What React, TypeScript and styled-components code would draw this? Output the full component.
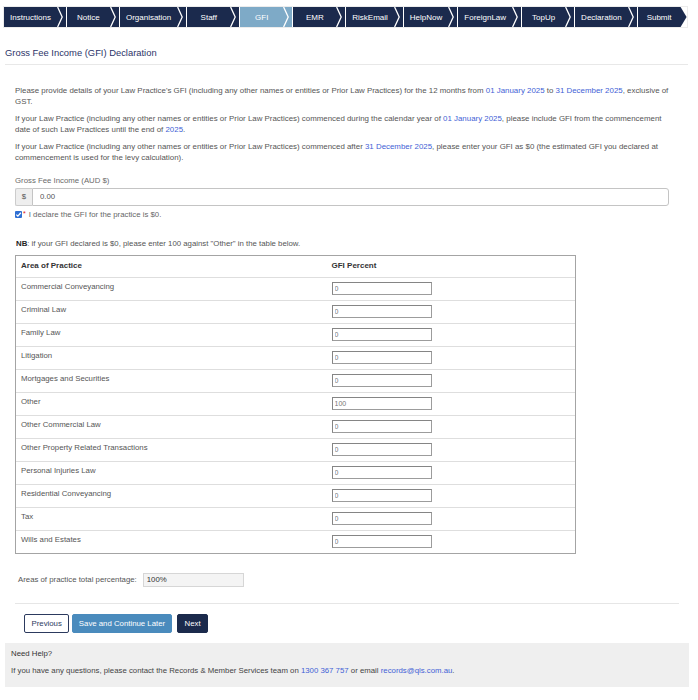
import React from "react";
import styled, { createGlobalStyle } from "styled-components";

const steps = [
	"Instructions",
	"Notice",
	"Organisation",
	"Staff",
	"GFI",
	"EMR",
	"RiskEmail",
	"HelpNow",
	"ForeignLaw",
	"TopUp",
	"Declaration",
	"Submit",
];

const areas = [
	{ name: "Commercial Conveyancing", value: "0" },
	{ name: "Criminal Law", value: "0" },
	{ name: "Family Law", value: "0" },
	{ name: "Litigation", value: "0" },
	{ name: "Mortgages and Securities", value: "0" },
	{ name: "Other", value: "100" },
	{ name: "Other Commercial Law", value: "0" },
	{ name: "Other Property Related Transactions", value: "0" },
	{ name: "Personal Injuries Law", value: "0" },
	{ name: "Residential Conveyancing", value: "0" },
	{ name: "Tax", value: "0" },
	{ name: "Wills and Estates", value: "0" },
];

const GlobalStyle = createGlobalStyle`
	* {
		box-sizing: border-box;
	}

	body {
		margin: 0;
		background: #fff;
		font-family: "Liberation Sans", Arial, sans-serif;
	}
`;

const App = () => {
	return (
		<>
			<GlobalStyle />
			<Page>
				<StepNav>
					{steps.map((step, i) => {
						const last = i === steps.length - 1;
						return (
							<Step key={step} $active={step === "GFI"} $last={last}>
								<StepLabel>{step}</StepLabel>
								{!last && (
									<Chevron width="6" height="20" viewBox="0 0 6 20">
										<polyline
											points="0.6,0 5.2,10 0.6,20"
											fill="none"
											stroke="#fff"
											strokeWidth="1.3"
										/>
									</Chevron>
								)}
							</Step>
						);
					})}
				</StepNav>

				<Title>Gross Fee Income (GFI) Declaration</Title>

				<Content>
					<Para>
						Please provide details of your Law Practice's GFI (including any other
						names or entities or Prior Law Practices) for the 12 months from{" "}
						<Highlight>01 January 2025</Highlight> to{" "}
						<Highlight>31 December 2025</Highlight>, exclusive of GST.
					</Para>
					<Para>
						If your Law Practice (including any other names or entities or Prior
						Law Practices) commenced during the calendar year of{" "}
						<Highlight>01 January 2025</Highlight>, please include GFI from the
						commencement date of such Law Practices until the end of{" "}
						<Highlight>2025</Highlight>.
					</Para>
					<Para>
						If your Law Practice (including any other names or entities or Prior
						Law Practices) commenced after <Highlight>31 December 2025</Highlight>,
						please enter your GFI as $0 (the estimated GFI you declared at
						commencement is used for the levy calculation).
					</Para>

					<FieldLabel>Gross Fee Income (AUD $)</FieldLabel>
					<InputGroup>
						<Addon>$</Addon>
						<MoneyInput defaultValue="0.00" />
					</InputGroup>

					<CheckRow>
						<CheckBox>
							<svg width="7" height="7" viewBox="0 0 7 7">
								<polyline
									points="1.3,3.6 2.9,5.1 5.8,1.8"
									fill="none"
									stroke="#fff"
									strokeWidth="1.3"
								/>
							</svg>
						</CheckBox>
						<Required>*</Required>
						<span>I declare the GFI for the practice is $0.</span>
					</CheckRow>

					<Note>
						<b>NB</b>: if your GFI declared is $0, please enter 100 against
						"Other" in the table below.
					</Note>

					<Table>
						<HeaderRow>
							<HeadCell>Area of Practice</HeadCell>
							<HeadCell $second>GFI Percent</HeadCell>
						</HeaderRow>
						{areas.map((area) => (
							<Row key={area.name}>
								<Cell>{area.name}</Cell>
								<Cell $second>
									<PercentInput defaultValue={area.value} />
								</Cell>
							</Row>
						))}
					</Table>

					<TotalRow>
						<span>Areas of practice total percentage:</span>
						<TotalInput readOnly value="100%" />
					</TotalRow>

					<Divider />

					<Buttons>
						<Button $variant="outline">Previous</Button>
						<Button $variant="light">Save and Continue Later</Button>
						<Button $variant="dark">Next</Button>
					</Buttons>
				</Content>

				<Help>
					<HelpTitle>Need Help?</HelpTitle>
					<HelpText>
						If you have any questions, please contact the Records &amp; Member
						Services team on <Highlight>1300 367 757</Highlight> or email{" "}
						<Highlight>records@qls.com.au</Highlight>.
					</HelpText>
				</Help>
			</Page>
		</>
	);
};

export default App;

const Page = styled.div`
	padding: 6px 9px 10px 3px;
	color: #555;
`;

const StepNav = styled.nav`
	display: flex;
	gap: 1px;
	margin-right: 1px;
	border: 1px solid #ececec;
	padding-right: 5px;
`;

const Step = styled.div<{ $active?: boolean; $last?: boolean }>`
	display: flex;
	height: 20px;
	padding-right: ${({ $last }) => ($last ? "6px" : "3px")};
	background: ${({ $active }) => ($active ? "#7eaac7" : "#1b2a4d")};
	color: #fff;
	clip-path: ${({ $last }) =>
		$last
			? "polygon(0 0, calc(100% - 6px) 0, 100% 50%, calc(100% - 6px) 100%, 0 100%)"
			: "none"};
`;

const StepLabel = styled.span`
	display: flex;
	align-items: center;
	justify-content: center;
	min-width: 43px;
	padding: 0 6px;
	font-size: 8px;
	white-space: nowrap;
`;

const Chevron = styled.svg`
	display: block;
	flex-shrink: 0;
`;

const Title = styled.h1`
	margin: 19px 1px 0 2px;
	padding-bottom: 5px;
	border-bottom: 1px solid #e8e8e8;
	font-size: 9.4px;
	line-height: 12px;
	font-weight: normal;
	color: #2c3468;
`;

const Content = styled.div`
	padding: 20px 17px 0 12px;
	font-size: 7.8px;
	line-height: 11px;
`;

const Para = styled.p`
	max-width: 658px;
	margin: 0 0 6px;
	font-size: 7.9px;
	color: #555;
`;

const Highlight = styled.span`
	color: #3f5fd6;
`;

const FieldLabel = styled.div`
	margin-top: 12px;
	margin-bottom: 1.5px;
	color: #6a6a6a;
`;

const InputGroup = styled.div`
	display: flex;
	height: 18px;
	margin-right: 3px;
`;

const Addon = styled.span`
	display: flex;
	align-items: center;
	justify-content: center;
	width: 17px;
	background: #eee;
	border: 1px solid #ccc;
	border-right: none;
	border-radius: 2px 0 0 2px;
	color: #555;
`;

const MoneyInput = styled.input`
	flex: 1;
	min-width: 0;
	border: 1px solid #c4c4c4;
	border-radius: 0 3px 3px 0;
	padding: 0 7px;
	font-family: inherit;
	font-size: 7.8px;
	color: #555;
	outline: none;
`;

const CheckRow = styled.div`
	display: flex;
	align-items: center;
	margin-top: 3.5px;
	color: #666;
`;

const CheckBox = styled.span`
	display: flex;
	align-items: center;
	justify-content: center;
	width: 7px;
	height: 7px;
	background: #2f6fd3;
	border-radius: 1px;
`;

const Required = styled.span`
	color: #d11;
	font-size: 7px;
	margin: -3px 3px 0 1px;
`;

const Note = styled.div`
	margin-top: 18px;
	padding-left: 1px;
	color: #555;

	b {
		color: #222;
	}
`;

const Table = styled.div`
	width: 561px;
	margin-top: 5.5px;
	border: 1px solid #a4a4a4;
`;

const HeaderRow = styled.div`
	display: grid;
	grid-template-columns: 309px 1fr;
	height: 21px;
`;

const Row = styled.div`
	display: grid;
	grid-template-columns: 309px 1fr;
	height: 23px;
	border-top: 1px solid #dedede;
`;

const HeadCell = styled.div<{ $second?: boolean }>`
	padding: 4.5px 0 0 ${({ $second }) => ($second ? "6.5px" : "5px")};
	font-size: 8px;
	font-weight: bold;
	color: #333;
`;

const Cell = styled.div<{ $second?: boolean }>`
	padding: ${({ $second }) => ($second ? "4px 0 0 6.5px" : "3px 0 0 5px")};
	color: #555;
`;

const PercentInput = styled.input`
	display: block;
	width: 100px;
	height: 13px;
	padding: 0 2px;
	border: 1px solid #9c9c9c;
	border-top-color: #858585;
	border-left-color: #858585;
	font-family: inherit;
	font-size: 7px;
	color: #777;
	outline: none;
`;

const TotalRow = styled.div`
	display: flex;
	align-items: center;
	gap: 6px;
	margin-top: 19px;
	padding-left: 3px;
	color: #555;
`;

const TotalInput = styled.input`
	width: 101px;
	height: 14px;
	padding: 0 3px;
	background: #f4f4f4;
	border: 1px solid #d6d6d6;
	font-family: inherit;
	font-size: 7.8px;
	color: #333;
	outline: none;
`;

const Divider = styled.hr`
	margin: 16px -7px 0 0;
	border: none;
	border-top: 1px solid #e6e6e6;
`;

const Buttons = styled.div`
	display: flex;
	gap: 2.5px;
	margin-top: 10px;
	padding-left: 9px;
`;

const Button = styled.button<{ $variant: "outline" | "light" | "dark" }>`
	height: 19px;
	padding: 0 ${({ $variant }) => ($variant === "light" ? "6px" : "6.5px")};
	margin-left: ${({ $variant }) => ($variant === "dark" ? "2.5px" : "0")};
	border-radius: 2px;
	font-family: inherit;
	font-size: 7.8px;
	cursor: pointer;
	border: 1px solid
		${({ $variant }) =>
			$variant === "outline"
				? "#2c3a5e"
				: $variant === "light"
				? "#4a8bbd"
				: "#1b2a4c"};
	background: ${({ $variant }) =>
		$variant === "outline"
			? "#fff"
			: $variant === "light"
			? "#4a8bbd"
			: "#1b2a4c"};
	color: ${({ $variant }) => ($variant === "outline" ? "#2c3a5e" : "#fff")};
`;

const Help = styled.div`
	margin: 10px 0 0 2px;
	padding: 5.5px 6px 10.5px;
	background: #efefef;
	font-size: 7.8px;
	line-height: 11px;
`;

const HelpTitle = styled.div`
	color: #333;
`;

const HelpText = styled.div`
	margin-top: 6px;
	color: #444;
`;
